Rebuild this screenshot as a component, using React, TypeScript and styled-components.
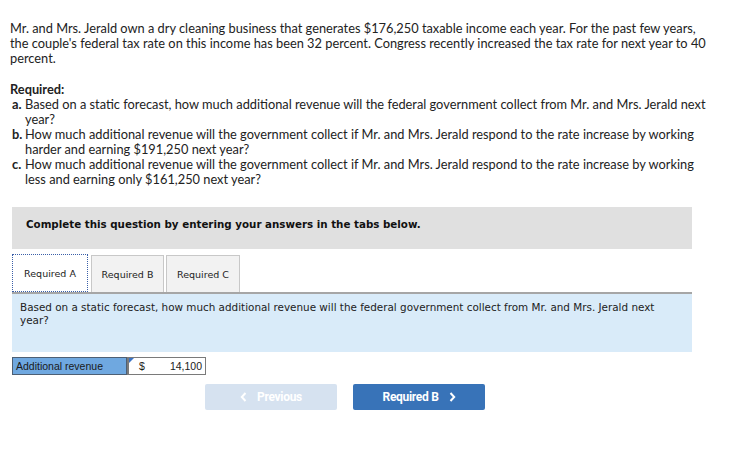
import styled, { createGlobalStyle } from "styled-components";

const Global = createGlobalStyle`
  body {
    margin: 0;
    background: #ffffff;
    color: #222222;
  }
`;

const Page = styled.div`
  width: 738px;
  padding: 21px 0 0 0;
`;

const Intro = styled.p`
  margin: 0 0 16px 10px;
  width: 702px;
  font-family: Lato, "Liberation Sans", sans-serif;
  font-size: 12.8px;
  line-height: 15px;
`;

const RequiredTitle = styled.div`
  margin-left: 10px;
  font-family: Lato, "Liberation Sans", sans-serif;
  font-weight: 700;
  font-size: 12.8px;
  line-height: 15px;
`;

const Parts = styled.ol`
  margin: 0;
  padding: 0;
  list-style: none;
  font-family: Lato, "Liberation Sans", sans-serif;
  font-size: 12.8px;
  line-height: 15px;
`;

const Part = styled.li`
  display: flex;
  padding-left: 12px;
  width: 698px;
  b {
    width: 13px;
    flex: none;
    font-weight: 700;
  }
`;

const Instruction = styled.div`
  margin: 20px 0 0 12px;
  width: 666px;
  height: 42px;
  padding-left: 14px;
  display: flex;
  align-items: center;
  background: #e0e0e0;
  font-family: "DejaVu Sans", Verdana, sans-serif;
  font-weight: 700;
  font-size: 10.3px;
  color: #111111;
  span {
    margin-top: -8px;
  }
`;

const Tabs = styled.div`
  display: flex;
  gap: 2px;
  margin: 5px 0 0 12px;
  height: 38px;
  align-items: flex-end;
`;

const Tab = styled.div<{ $active?: boolean; $w: number }>`
  width: ${(p) => p.$w}px;
  height: ${(p) => (p.$active ? 38 : 37)}px;
  box-sizing: border-box;
  display: flex;
  align-items: center;
  justify-content: center;
  font-family: "DejaVu Sans", Tahoma, sans-serif;
  font-size: 9.5px;
  color: #222222;
  background: ${(p) => (p.$active ? "#ffffff" : "#f2f2f2")};
  border: ${(p) => (p.$active ? "1px dotted #3a5fa8" : "1px solid #c8c8c8")};
  border-bottom: ${(p) => (p.$active ? "1px dotted #3a5fa8" : "none")};
  margin-right: ${(p) => (p.$active ? 1 : 0)}px;
`;

const Panel = styled.div`
  margin-left: 12px;
  width: 680px;
  height: 60px;
  box-sizing: border-box;
  background: #d9ebf9;
  border-top: 2px solid #a6a6a6;
  padding: 7px 26px 0 8px;
  font-family: "DejaVu Sans", Verdana, sans-serif;
  font-size: 10.4px;
  line-height: 13px;
  color: #222222;
`;

const AnswerRow = styled.div`
  display: flex;
  margin: 5px 0 0 12px;
  height: 18px;
`;

const Label = styled.div`
  width: 115px;
  box-sizing: border-box;
  background: #6fa8e0;
  border: 1px solid #4d5f74;
  display: flex;
  align-items: center;
  padding-left: 3px;
  font-family: "Liberation Sans", Arial, sans-serif;
  font-size: 10.5px;
  color: #1a1a1a;
`;

const Field = styled.div`
  position: relative;
  width: 79px;
  box-sizing: border-box;
  border: 1px solid #7a7a7a;
  border-left: 2px solid #7a7a7a;
  background: #ffffff;
  display: flex;
  align-items: center;
  justify-content: space-between;
  padding: 0 3px 0 10px;
  font-family: "Liberation Sans", Arial, sans-serif;
  font-size: 10.5px;
  color: #1a1a1a;
`;

const Flag = styled.span`
  position: absolute;
  left: 0;
  top: 0;
  width: 0;
  height: 0;
  border-top: 5px solid #3a73c6;
  border-right: 5px solid transparent;
`;

const Nav = styled.div`
  display: flex;
  gap: 16px;
  margin: 9px 0 0 205px;
`;

const NavButton = styled.button<{ $disabled?: boolean }>`
  width: 132px;
  height: 26px;
  border: none;
  border-radius: 2px;
  background: ${(p) => (p.$disabled ? "#d6e2f0" : "#3873b8")};
  color: #ffffff;
  font-family: Roboto, "Liberation Sans", sans-serif;
  font-weight: 700;
  font-size: 12px;
  letter-spacing: -0.3px;
  display: flex;
  align-items: center;
  justify-content: center;
  gap: 10px;
  padding: 0;
  svg {
    flex: none;
  }
`;

const Chevron = ({ left }: { left?: boolean }) => (
  <svg width="7" height="10" viewBox="0 0 7 10">
    <path
      d={left ? "M5.5 1 L1.8 5 L5.5 9" : "M1.5 1 L5.2 5 L1.5 9"}
      fill="none"
      stroke="#ffffff"
      strokeWidth="2"
    />
  </svg>
);

export default function App() {
  return (
    <Page>
      <Global />
      <Intro>
        Mr. and Mrs. Jerald own a dry cleaning business that generates $176,250 taxable income each year. For the past few years,
        the couple's federal tax rate on this income has been 32 percent. Congress recently increased the tax rate for next year to 40
        percent.
      </Intro>
      <RequiredTitle>Required:</RequiredTitle>
      <Parts>
        <Part>
          <b>a.</b>
          <span>Based on a static forecast, how much additional revenue will the federal government collect from Mr. and Mrs. Jerald next year?</span>
        </Part>
        <Part>
          <b>b.</b>
          <span>How much additional revenue will the government collect if Mr. and Mrs. Jerald respond to the rate increase by working harder and earning $191,250 next year?</span>
        </Part>
        <Part>
          <b>c.</b>
          <span>How much additional revenue will the government collect if Mr. and Mrs. Jerald respond to the rate increase by working less and earning only $161,250 next year?</span>
        </Part>
      </Parts>
      <Instruction>
        <span>Complete this question by entering your answers in the tabs below.</span>
      </Instruction>
      <Tabs>
        <Tab $active $w={76}>Required A</Tab>
        <Tab $w={73}>Required B</Tab>
        <Tab $w={74}>Required C</Tab>
      </Tabs>
      <Panel>
        Based on a static forecast, how much additional revenue will the federal government collect from Mr. and Mrs. Jerald next year?
      </Panel>
      <AnswerRow>
        <Label>Additional revenue</Label>
        <Field>
          <Flag />
          <span>$</span>
          <span>14,100</span>
        </Field>
      </AnswerRow>
      <Nav>
        <NavButton $disabled>
          <Chevron left />
          Previous
        </NavButton>
        <NavButton>
          Required B
          <Chevron />
        </NavButton>
      </Nav>
    </Page>
  );
}
